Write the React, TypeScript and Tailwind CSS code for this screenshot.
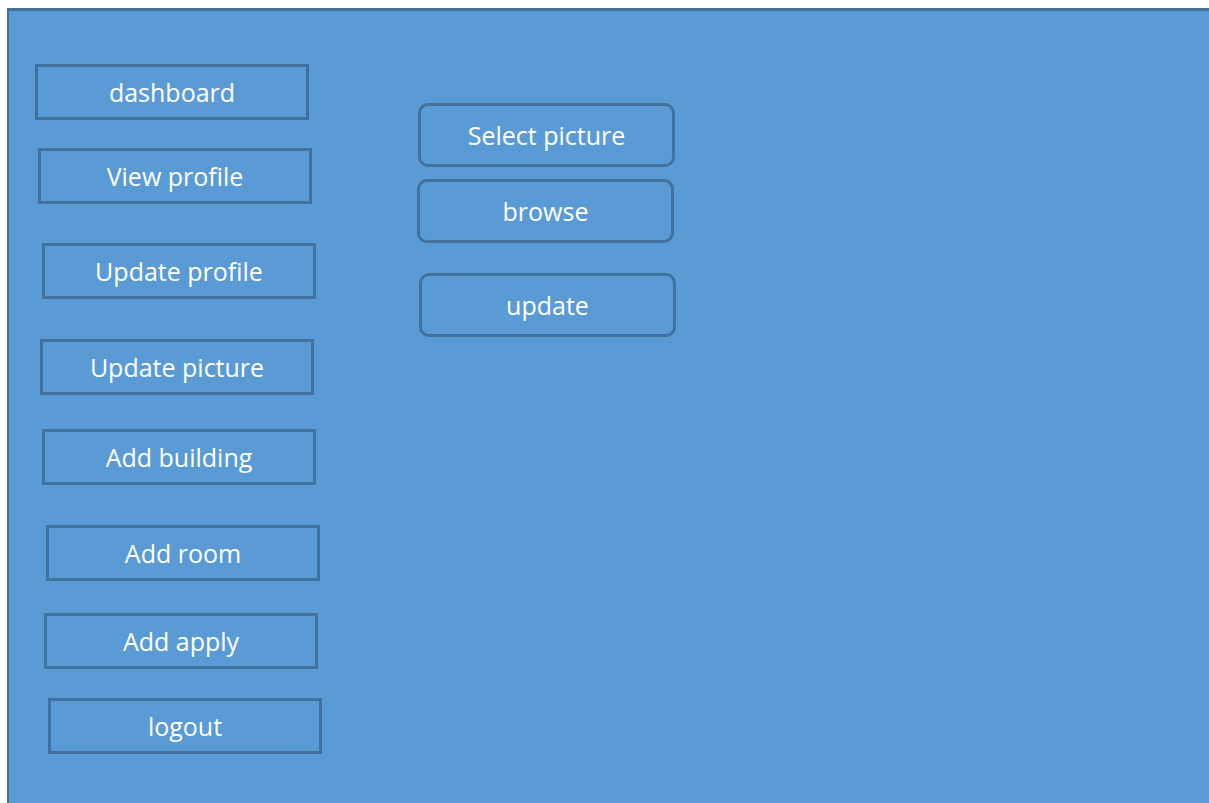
import React from "react";

const menu = [
  { label: "dashboard", cls: "mt-[53px] ml-[26px]" },
  { label: "View profile", cls: "mt-[28px] ml-[29px]" },
  { label: "Update profile", cls: "mt-[39px] ml-[33px]" },
  { label: "Update picture", cls: "mt-[40px] ml-[31px]" },
  { label: "Add building", cls: "mt-[34px] ml-[33px]" },
  { label: "Add room", cls: "mt-[40px] ml-[37px]" },
  { label: "Add apply", cls: "mt-[32px] ml-[35px]" },
  { label: "logout", cls: "mt-[29px] ml-[39px]" },
];

const App = () => {
  return (
    <div className="w-full h-[803px] bg-white overflow-hidden font-['Open_Sans',sans-serif]">
      <div className="mt-[8px] ml-[7px] h-[795px] bg-[#5B9BD5] border-t-[3px] border-l-2 border-[#41719C] flex">
        {/* side menu */}
        <div className="flex flex-col w-[330px]">
          {menu.map((m) => (
            <div
              key={m.label}
              className={`${m.cls} w-[274px] h-[56px] border-[3px] border-[#41719C] flex items-center justify-center text-white text-[25px] leading-none`}
            >
              {m.label}
            </div>
          ))}
        </div>

        {/* picture upload */}
        <div className="flex flex-col ml-[77px] mt-[92px]">
          <div className="ml-[2px] w-[257px] h-[64px] border-[3px] border-[#41719C] rounded-[10px] flex items-center justify-center text-white text-[25px] leading-none">
            Select picture
          </div>
          <div className="mt-[12px] ml-[1px] w-[257px] h-[64px] border-[3px] border-[#41719C] rounded-[10px] flex items-center justify-center text-white text-[25px] leading-none">
            browse
          </div>
          <div className="mt-[30px] ml-[3px] w-[257px] h-[64px] border-[3px] border-[#41719C] rounded-[10px] flex items-center justify-center text-white text-[25px] leading-none">
            update
          </div>
        </div>
      </div>
    </div>
  );
};

export default App;
